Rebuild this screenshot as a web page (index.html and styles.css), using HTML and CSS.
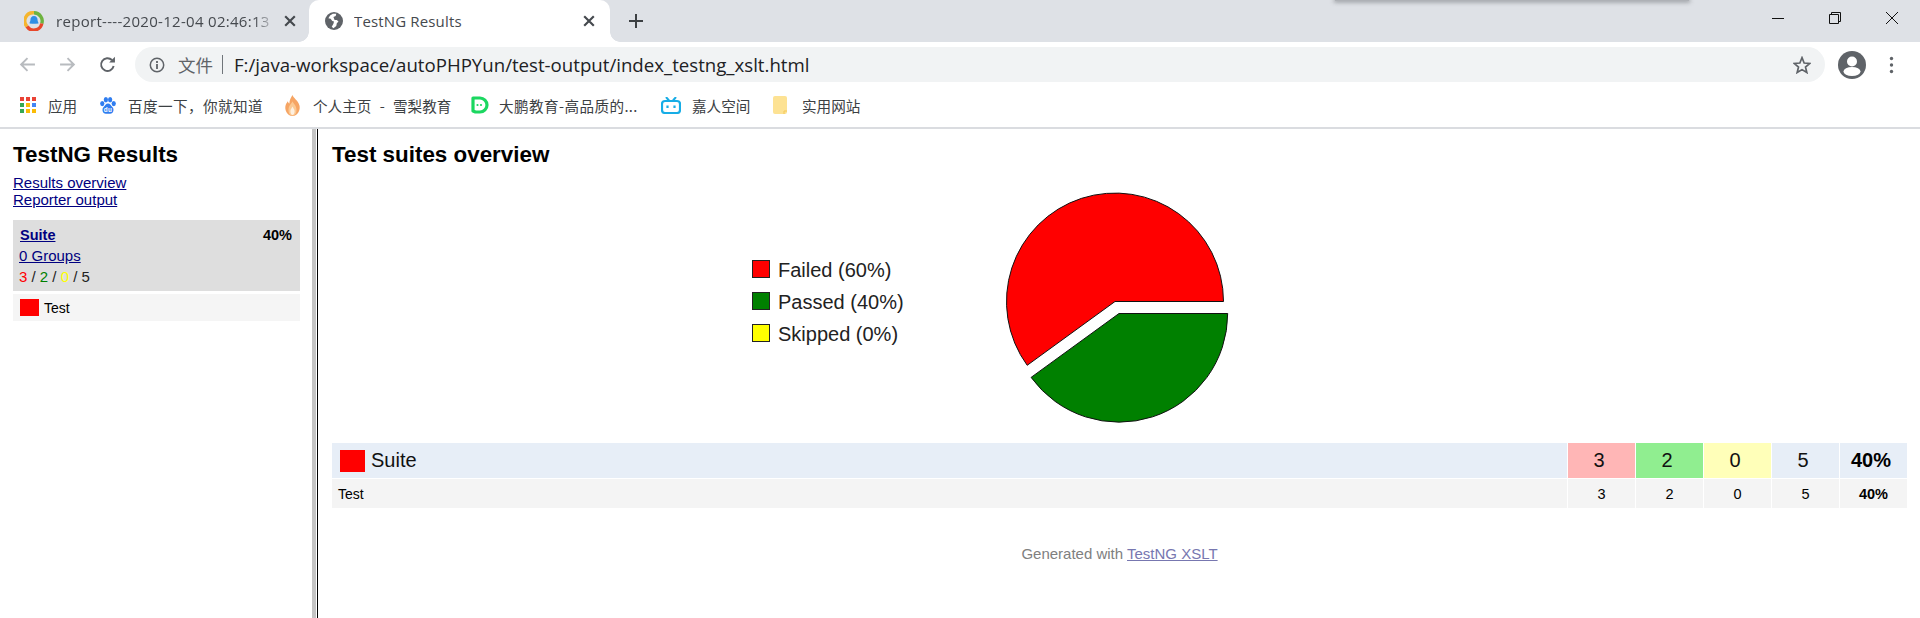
FILE: index.html
```html
<!DOCTYPE html>
<html lang="zh">
<head>
<meta charset="utf-8">
<title>TestNG Results</title>
<link rel="stylesheet" href="styles.css">
</head>
<body>
<header class="chrome">
  <div class="tabstrip">
    <div class="tab tab-inactive">
      <svg class="favicon" viewBox="0 0 20 20"><path d="M3 15.500A8.200 8.200 0 0 1 10 1.800" fill="none" stroke="#f5b52e" stroke-width="3.400"/><path d="M10 1.800a8.200 8.200 0 0 1 7.800 10.700" fill="none" stroke="#6db33f" stroke-width="3.400"/><path d="M17.800 12.500A8.200 8.200 0 0 1 3 15.500" fill="none" stroke="#e8472a" stroke-width="3.400"/><path d="M10 5c2.400 0 3.600 2 3.600 4.200 0 1 .7 2 1 3-1 .6-2 .5-2.400.2-.6.5-3.800.5-4.400 0-.4.3-1.400.4-2.400-.2.300-1 1-2 1-3C6.400 7 7.600 5 10 5z" fill="#2f8ee5"/></svg>
      <span class="tab-title tab-title-fade">report----2020-12-04 02:46:13</span>
      <svg class="tab-close" viewBox="0 0 10 10"><path d="M1 1l8 8M9 1l-8 8" stroke="#45494e" stroke-width="1.800"/></svg>
    </div>
    <div class="tab tab-active">
      <svg class="favicon" viewBox="0 0 16 16"><circle cx="8" cy="8" r="8" fill="#5f6368"/><path d="M7 1.500 4.500 3 3 5.500l2 .5 1.500 2 1.500.5-.5 2L6 13l1.500 1.500 2.500-2 .5-2.500 1.500-1.500-1.500-1.500H8.500L7.500 4.500 9.500 3.500 10 1.500z" fill="#fff"/></svg>
      <span class="tab-title">TestNG Results</span>
      <svg class="tab-close" viewBox="0 0 10 10"><path d="M1 1l8 8M9 1l-8 8" stroke="#45494e" stroke-width="1.800"/></svg>
    </div>
    <svg class="new-tab" viewBox="0 0 16 16"><path d="M8 1v14M1 8h14" stroke="#3c4043" stroke-width="2"/></svg>
    <div class="window-controls">
      <svg class="win-btn" viewBox="0 0 14 14"><path d="M1 7.500h12" stroke="#111" stroke-width="1"/></svg>
      <svg class="win-btn" viewBox="0 0 14 14"><path d="M1.500 3.500h9v9h-9zM3.500 3.500v-2h9v9h-2" fill="none" stroke="#111" stroke-width="1"/></svg>
      <svg class="win-btn" viewBox="0 0 14 14"><path d="M1 1l12 12M13 1L1 13" stroke="#111" stroke-width="1"/></svg>
    </div>
    <div class="floating-shadow"></div>
  </div>
  <div class="toolbar">
    <svg class="nav-icon" viewBox="0 0 16 16"><path d="M15 8H2M8 2 2 8l6 6" fill="none" stroke="#b8bbbf" stroke-width="1.800"/></svg>
    <svg class="nav-icon" viewBox="0 0 16 16"><path d="M1 8h13M8 2l6 6-6 6" fill="none" stroke="#b8bbbf" stroke-width="1.800"/></svg>
    <svg class="nav-icon" viewBox="0 0 16 16"><path d="M13.800 9.500A6 6 0 1 1 12.200 3.800" fill="none" stroke="#5f6368" stroke-width="1.800"/><path d="M9.500 6.200H15V.7z" fill="#5f6368"/></svg>
    <div class="omnibox">
      <svg class="info-icon" viewBox="0 0 16 16"><circle cx="8" cy="8" r="6.700" fill="none" stroke="#5f6368" stroke-width="1.500"/><path d="M8 7v5M8 4v2" stroke="#5f6368" stroke-width="1.800"/></svg>
      <span class="scheme">文件</span>
      <span class="divider"></span>
      <span class="url">F:/java-workspace/autoPHPYun/test-output/index_testng_xslt.html</span>
      <svg class="star" viewBox="0 0 16 16"><path d="M8 1.500 9.900 6.200l5 .4-3.800 3.200 1.200 4.900L8 12.100l-4.300 2.600 1.200-4.900L1.100 6.600l5-.4z" fill="none" stroke="#5f6368" stroke-width="1.500"/></svg>
    </div>
    <svg class="avatar" viewBox="0 0 28 28"><circle cx="14" cy="14" r="14" fill="#5f6368"/><circle cx="14" cy="10.500" r="5" fill="#fff"/><ellipse cx="14" cy="20.500" rx="8.500" ry="4.500" fill="#fff"/></svg>
    <svg class="menu" viewBox="0 0 4 18"><circle cx="2" cy="2.500" r="1.700" fill="#5f6368"/><circle cx="2" cy="9" r="1.700" fill="#5f6368"/><circle cx="2" cy="15.500" r="1.700" fill="#5f6368"/></svg>
  </div>
  <nav class="bookmarks">
    <span class="bookmark bm-apps">
      <svg class="bm-icon" viewBox="0 0 16 16"><rect x="0" y="0" width="4" height="4" fill="#ea4335"/><rect x="6" y="0" width="4" height="4" fill="#ea4335"/><rect x="12" y="0" width="4" height="4" fill="#ea4335"/><rect x="0" y="6" width="4" height="4" fill="#34a853"/><rect x="6" y="6" width="4" height="4" fill="#fbbc05"/><rect x="12" y="6" width="4" height="4" fill="#4285f4"/><rect x="0" y="12" width="4" height="4" fill="#34a853"/><rect x="6" y="12" width="4" height="4" fill="#fbbc05"/><rect x="12" y="12" width="4" height="4" fill="#fbbc05"/></svg>
      应用
    </span>
    <span class="bookmark bm-baidu">
      <svg class="bm-icon" viewBox="0 0 16 16"><ellipse cx="2.600" cy="6.200" rx="2" ry="2.500" fill="#2f7df0"/><ellipse cx="6" cy="2.600" rx="2" ry="2.500" fill="#2f7df0"/><ellipse cx="10" cy="2.600" rx="2" ry="2.500" fill="#2f7df0"/><ellipse cx="13.400" cy="6.200" rx="2" ry="2.500" fill="#2f7df0"/><path d="M8 6.200c2 0 2.800 2 4.300 3.500 1.700 1.900.9 6-2.300 6H6c-3.200 0-4-4.100-2.300-6C5.200 8.200 6 6.200 8 6.200z" fill="#2f7df0"/><text x="8" y="14" class="bm-du">du</text></svg>
      百度一下，你就知道
    </span>
    <span class="bookmark bm-flame">
      <svg class="bm-icon" viewBox="0 0 16 20"><path d="M8 0c1 3 5 5 6.500 9.500C16 14 13 20 8 20S0 14 1.500 9.500C2 8 3 7 3.500 6c.3 1.200 1 2 1.500 2.200C5 5 6.500 2.500 8 0z" fill="#f6a564"/><path d="M8 6c.8 2.500 3.800 4 3.800 8S10 19.500 8 19.500 4.200 18 4.200 14 7.200 8.500 8 6z" fill="#fbc993"/><path d="M8 11c.5 1.500 2 2.500 2 4.500S9 19 8 19s-2-1.500-2-3.500S7.500 12.500 8 11z" fill="#fef0e0"/></svg>
      个人主页 - 雪梨教育
    </span>
    <span class="bookmark bm-dapeng">
      <svg class="bm-icon" viewBox="0 0 19 18"><path d="M3 2h7a7 7 0 0 1 0 14H5.500L3 15z" fill="none" stroke="#1bd760" stroke-width="3.200" stroke-linejoin="round"/><circle cx="7.500" cy="9" r="1.100" fill="#1bd760"/><circle cx="11" cy="9" r="1.100" fill="#1bd760"/></svg>
      大鹏教育-高品质的...
    </span>
    <span class="bookmark bm-bili">
      <svg class="bm-icon" viewBox="0 0 20 17"><path d="M5 0l3 3.500M15 0l-3 3.500" stroke="#17ade6" stroke-width="2"/><rect x="1" y="4" width="18" height="12" rx="3" fill="none" stroke="#17ade6" stroke-width="2.200"/><path d="M6.500 8.500v2.500M13.500 8.500v2.500" stroke="#17ade6" stroke-width="2.200"/></svg>
      嘉人空间
    </span>
    <span class="bookmark bm-folder">
      <svg class="bm-icon" viewBox="0 0 14 18"><rect width="14" height="18" rx="2" fill="#fde293"/><path d="M11 18v-3h3" fill="none" stroke="#f3c95a" stroke-width="1"/></svg>
      实用网站
    </span>
  </nav>
</header>

<div class="page">
  <aside class="sidebar">
    <h1 class="heading">TestNG Results</h1>
    <div class="side-links">
      <a href="#">Results overview</a>
      <a href="#">Reporter output</a>
    </div>
    <section class="suite-panel">
      <div class="suite-head"><a class="suite-link" href="#">Suite</a><b>40%</b></div>
      <a class="groups" href="#">0 Groups</a>
      <div class="counts"><span class="c-fail">3</span> / <span class="c-pass">2</span> / <span class="c-skip">0</span> / 5</div>
    </section>
    <div class="test-item"><span class="swatch-side"></span>Test</div>
  </aside>
  <div class="splitter"></div>
  <main class="content">
    <h1 class="heading">Test suites overview</h1>
    <svg class="chart" viewBox="0 0 1575 257" role="img">
      <rect x="420.500" y="74.500" width="17" height="17" fill="#f00" stroke="#222"/>
      <text x="446" y="91" class="legend">Failed (60%)</text>
      <rect x="420.500" y="106.500" width="17" height="17" fill="#008000" stroke="#222"/>
      <text x="446" y="123" class="legend">Passed (40%)</text>
      <rect x="420.500" y="138.500" width="17" height="17" fill="#ff0" stroke="#222"/>
      <text x="446" y="155" class="legend">Skipped (0%)</text>
      <path d="M783 115.500H891.500A108.500 108.500 0 1 0 695.200 179.300Z" fill="#f00" stroke="#111" stroke-width="1"/>
      <path d="M787 127.500H895.700A108.700 108.700 0 0 1 699.100 191.400Z" fill="#008000" stroke="#111" stroke-width="1"/>
    </svg>
    <div class="summary">
      <div class="cell suite-name"><span class="swatch-main"></span>Suite</div>
      <div class="cell num bg-fail">3</div>
      <div class="cell num bg-pass">2</div>
      <div class="cell num bg-skip">0</div>
      <div class="cell num bg-total">5</div>
      <div class="cell num bg-total strong">40%</div>
      <div class="cell test-name">Test</div>
      <div class="cell sub">3</div>
      <div class="cell sub">2</div>
      <div class="cell sub">0</div>
      <div class="cell sub">5</div>
      <div class="cell sub strong">40%</div>
    </div>
    <p class="footer">Generated with <a href="#">TestNG XSLT</a></p>
  </main>
</div>
</body>
</html>
```
FILE: styles.css
```css
* { box-sizing: border-box; }
html, body { margin: 0; padding: 0; height: 100%; overflow: hidden; background: #fff; }
body { font-family: "Liberation Sans", Arial, sans-serif; color: #000; display: flex; flex-direction: column; }

.chrome { flex: none; font-family: "Noto Sans CJK SC", "Noto Sans", sans-serif; border-bottom: 2px solid #dadce0; }
.tabstrip { height: 42px; background: #dee1e6; display: flex; align-items: flex-end; padding-left: 8px; position: relative; }
.tab { height: 42px; display: flex; align-items: center; position: relative; }
.tab-inactive { width: 301px; padding: 0 13px 0 16px; }
.tab-inactive .favicon { width: 20px; height: 20px; margin-right: 12px; }
.tab-active { background: #fff; width: 301px; border-radius: 10px 10px 0 0; padding: 0 15px 0 16px; }
.tab-active::before, .tab-active::after { content: ""; position: absolute; bottom: 0; width: 10px; height: 10px; }
.tab-active::before { left: -10px; background: radial-gradient(circle at 0 0, transparent 9.500px, #fff 10px); }
.tab-active::after { right: -10px; background: radial-gradient(circle at 100% 0, transparent 9.500px, #fff 10px); }
.favicon { width: 18px; height: 18px; flex: none; margin-right: 11px; }
.tab-title { font: 15px/20px "Open Sans", "Noto Sans", sans-serif; letter-spacing: .15px; color: #45494e; flex: 1; white-space: nowrap; overflow: hidden; }
.tab-title-fade { letter-spacing: .3px; -webkit-mask-image: linear-gradient(to right, #000 90%, transparent); mask-image: linear-gradient(to right, #000 90%, transparent); }
.tab-close { width: 12px; height: 12px; flex: none; margin-left: 8px; }
.new-tab { width: 16px; height: 16px; margin: 0 0 13px 18px; flex: none; }
.window-controls { margin-left: auto; align-self: flex-start; display: flex; gap: 43px; padding: 11px 21px 0 0; }
.win-btn { width: 14px; height: 14px; }
.floating-shadow { position: absolute; left: 1335px; top: 0; width: 354px; height: 1px; box-shadow: 0 0 4px 1px rgba(60, 64, 67, .55); background: #aeb1b6; }

.toolbar { height: 43px; display: flex; align-items: center; padding: 2px 0 0 19px; }
.nav-icon { width: 17px; height: 17px; flex: none; margin-right: 23px; }
.omnibox { width: 1690px; margin-left: -4px; height: 35px; border-radius: 18px; background: #f1f3f4; display: flex; align-items: center; padding: 0 14px; }
.info-icon { width: 16px; height: 16px; flex: none; margin-right: 13px; }
.scheme { font-size: 17.500px; color: #5f6368; line-height: 20px; }
.divider { width: 1px; height: 19px; background: #70757a; margin: 0 11px 0 9px; }
.url { font: 18.650px/24px "Open Sans", "Noto Sans", sans-serif; color: #202124; flex: 1; white-space: nowrap; }
.star { width: 18px; height: 18px; flex: none; }
.avatar { width: 28px; height: 28px; flex: none; margin-left: 13px; }
.menu { width: 5px; height: 18px; flex: none; margin-left: 23px; }

.bookmarks { height: 42px; display: flex; align-items: center; padding: 0 0 2px 20px; font-size: 14.600px; color: #3c4043; }
.bookmark { display: flex; align-items: center; white-space: nowrap; }
.bm-icon { width: 16px; height: 16px; flex: none; margin-right: 12px; }
.bm-du { font: bold 6px "Liberation Sans", Arial, sans-serif; fill: #fff; text-anchor: middle; }
.bm-apps { width: 79px; }
.bm-baidu { width: 185px; letter-spacing: .4px; }
.bm-baidu .bm-icon { width: 18px; height: 17px; margin-right: 11px; }
.bm-flame { width: 186px; word-spacing: 5px; }
.bm-flame .bm-icon { width: 17px; height: 21px; margin-right: 12px; }
.bm-dapeng { width: 191px; letter-spacing: .4px; }
.bm-dapeng .bm-icon { width: 19px; height: 18px; margin-right: 10px; }
.bm-bili { width: 112px; }
.bm-bili .bm-icon { width: 20px; height: 17px; margin-right: 11px; }
.bm-folder .bm-icon { width: 14px; height: 18px; margin-right: 15px; }

.page { flex: 1; display: flex; min-height: 0; }
.sidebar { width: 312px; flex: none; padding: 0 12px 0 13px; }
.splitter { width: 6px; flex: none; background: #fff; border-left: 4px solid #c4c4c4; border-right: 1px solid #000; }
.content { flex: 1; min-width: 0; padding: 0 13px 0 14px; }

.heading { font-size: 22.400px; line-height: 26px; font-weight: bold; margin: 13px 0 0; }
a { color: #000080; }
.side-links { margin-top: 6px; font-size: 15px; line-height: 17px; display: flex; flex-direction: column; align-items: flex-start; }
.suite-panel { margin-top: 12px; height: 71px; background: #dedede; padding: 6px 8px 0 6px; font-size: 15px; line-height: 21px; }
.suite-head { display: flex; justify-content: space-between; font-size: 14.500px; line-height: 19px; padding-left: 1px; }
.suite-link { font-weight: bold; }
.groups { display: block; }
.counts { color: #222; }
.c-fail { color: #f00; }
.c-pass { color: #008000; }
.c-skip { color: #ff0; }
.test-item { margin-top: 3px; height: 27px; background: #f5f5f5; display: flex; align-items: center; padding-left: 7px; font-size: 14px; }
.swatch-side { width: 19px; height: 17px; background: #f00; margin-right: 5px; flex: none; }

.chart { display: block; width: 1575px; height: 257px; margin-top: 18px; }
.legend { font: 20px "Liberation Sans", Arial, sans-serif; fill: #222; }
.summary { display: grid; grid-template-columns: 1fr repeat(5, 67px); gap: 1px; }
.cell { display: flex; align-items: center; justify-content: center; }
.suite-name { height: 35px; justify-content: flex-start; background: #e7eef7; padding-left: 8px; font-size: 20px; color: #111; }
.swatch-main { width: 25px; height: 22px; background: #f00; margin-right: 6px; flex: none; }
.num { height: 35px; font-size: 20px; color: #111; padding-right: 5px; }
.bg-fail { background: #ffb6b6; }
.bg-pass { background: #90ee90; }
.bg-skip { background: #ffffb9; }
.bg-total { background: #e7eef7; }
.strong { font-weight: bold; color: #000; }
.test-name { height: 29px; justify-content: flex-start; background: #f4f4f4; padding-left: 6px; font-size: 14px; }
.sub { height: 29px; background: #f4f4f4; font-size: 14.500px; }
.footer { margin: 37px 0 0; text-align: center; font-size: 15px; line-height: 18px; color: #808080; }
.footer a { color: #7777b0; }
```
